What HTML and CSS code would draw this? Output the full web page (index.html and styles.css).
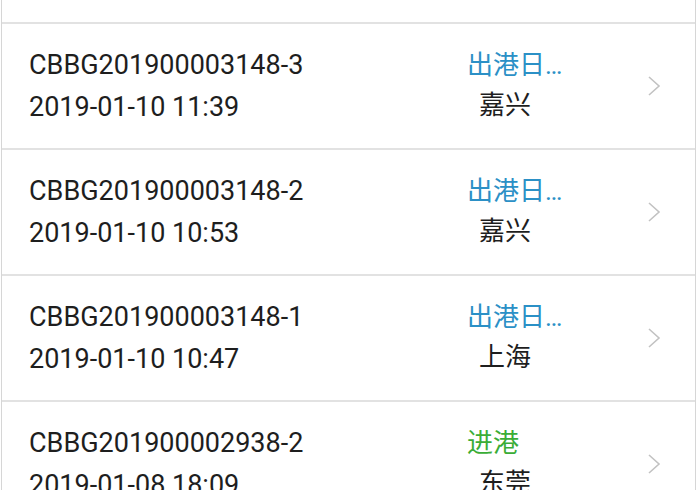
FILE: index.html
```html
<!DOCTYPE html>
<html lang="zh">
<head>
<meta charset="utf-8">
<title>单据列表</title>
<link rel="stylesheet" href="styles.css">
</head>
<body>
<div class="list">
  <div class="row-tail"></div>
  <div class="row">
    <div class="main">
      <div class="no">CBBG201900003148-3</div>
      <div class="time">2019-01-10 11:39</div>
    </div>
    <div class="status">
      <div class="type out">出港日…</div>
      <div class="place">嘉兴</div>
    </div>
    <svg class="chev" width="14" height="22" viewBox="0 0 14 22"><path d="M2 2 L12 11 L2 20" fill="none" stroke="#c2c2c2" stroke-width="1.6"/></svg>
  </div>
  <div class="row">
    <div class="main">
      <div class="no">CBBG201900003148-2</div>
      <div class="time">2019-01-10 10:53</div>
    </div>
    <div class="status">
      <div class="type out">出港日…</div>
      <div class="place">嘉兴</div>
    </div>
    <svg class="chev" width="14" height="22" viewBox="0 0 14 22"><path d="M2 2 L12 11 L2 20" fill="none" stroke="#c2c2c2" stroke-width="1.6"/></svg>
  </div>
  <div class="row">
    <div class="main">
      <div class="no">CBBG201900003148-1</div>
      <div class="time">2019-01-10 10:47</div>
    </div>
    <div class="status">
      <div class="type out">出港日…</div>
      <div class="place">上海</div>
    </div>
    <svg class="chev" width="14" height="22" viewBox="0 0 14 22"><path d="M2 2 L12 11 L2 20" fill="none" stroke="#c2c2c2" stroke-width="1.6"/></svg>
  </div>
  <div class="row">
    <div class="main">
      <div class="no">CBBG201900002938-2</div>
      <div class="time">2019-01-08 18:09</div>
    </div>
    <div class="status">
      <div class="type in">进港</div>
      <div class="place">东莞</div>
    </div>
    <svg class="chev" width="14" height="22" viewBox="0 0 14 22"><path d="M2 2 L12 11 L2 20" fill="none" stroke="#c2c2c2" stroke-width="1.6"/></svg>
  </div>
</div>
</body>
</html>
```
FILE: styles.css
```css
html, body {
  margin: 0;
  padding: 0;
  background: #ffffff;
  overflow: hidden;
}
body {
  font-family: Roboto, "Noto Sans CJK SC", sans-serif;
  color: #1e1e1e;
}
.list {
  box-sizing: border-box;
  margin-left: 1px;
  width: 695px;
  border-left: 1px solid #d6d6d6;
  border-right: 1px solid #d6d6d6;
}
.row-tail {
  height: 22px;
  border-bottom: 2px solid #e2e2e2;
}
.row {
  display: flex;
  align-items: center;
  height: 124px;
  padding: 0 34px 0 27px;
  border-bottom: 2px solid #e2e2e2;
}
.main {
  flex: 1;
  font-size: 27px;
  line-height: 42px;
}
.status {
  width: 154px;
  font-size: 26px;
  line-height: 40px;
  margin-top: -2px;
}
.type {
  white-space: nowrap;
}
.type.out { color: #2b90c6; }
.type.in { color: #3aad36; }
.place {
  padding-left: 12px;
  color: #1e1e1e;
}
.chev {
  display: block;
  margin-left: 26px;
  flex: none;
}
```
